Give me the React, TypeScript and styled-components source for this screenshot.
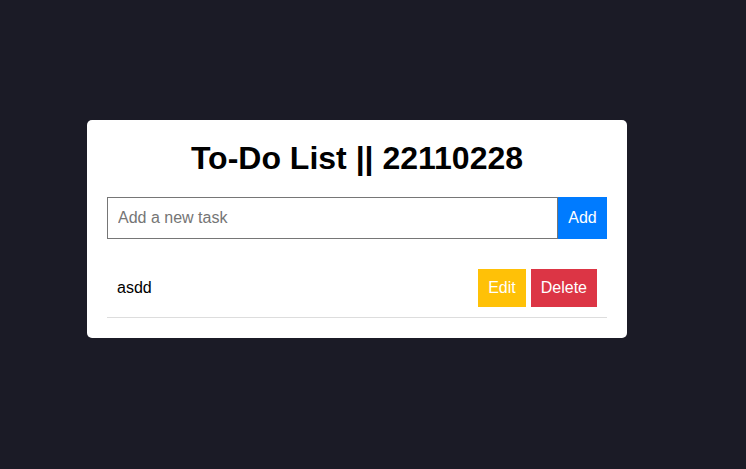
import React, { useState } from "react";
import styled, { createGlobalStyle } from "styled-components";

const GlobalStyle = createGlobalStyle`
  html, body {
    margin: 0;
    padding: 0;
    background: #1b1b26;
    font-family: "Liberation Sans", Arial, sans-serif;
  }
  * { box-sizing: border-box; }
`;

const Page = styled.div`
  min-height: 469px;
  padding: 120px 0 0 87px;
`;

const Card = styled.div`
  width: 540px;
  background: #ffffff;
  border-radius: 5px;
  padding: 20px;
`;

const Title = styled.h1`
  margin: 0 0 20px;
  font-size: 32px;
  font-weight: bold;
  color: #000;
  text-align: center;
  line-height: 37px;
`;

const InputRow = styled.div`
  display: flex;
`;

const TaskInput = styled.input`
  flex: 1;
  height: 42px;
  padding: 0 10px;
  font-size: 16px;
  font-family: "Liberation Sans", Arial, sans-serif;
  border: 1px solid #767676;
  border-radius: 0;
  outline: none;
  color: #000;
  &::placeholder { color: #757575; }
`;

const Button = styled.button<{ $bg: string }>`
  background: ${(p) => p.$bg};
  color: #fff;
  border: none;
  border-radius: 0;
  font-size: 16px;
  font-family: "Liberation Sans", Arial, sans-serif;
  padding: 10px;
  line-height: 18px;
  cursor: pointer;
`;

const AddButton = styled(Button)`
  height: 42px;
  width: 49px;
`;

const List = styled.ul`
  list-style: none;
  margin: 20px 0 0;
  padding: 0;
`;

const Item = styled.li`
  display: flex;
  align-items: center;
  padding: 10px;
  border-bottom: 1px solid #dddddd;
  font-size: 16px;
  color: #000;
`;

const ItemText = styled.span`
  flex: 1;
`;

const Actions = styled.div`
  display: flex;
  gap: 5px;
`;

export default function App() {
  const [tasks] = useState<string[]>(["asdd"]);
  const [value, setValue] = useState("");
  return (
    <>
      <GlobalStyle />
      <Page>
        <Card>
          <Title>To-Do List || 22110228</Title>
          <InputRow>
            <TaskInput
              placeholder="Add a new task"
              value={value}
              onChange={(e) => setValue(e.target.value)}
            />
            <AddButton $bg="#007bff">Add</AddButton>
          </InputRow>
          <List>
            {tasks.map((t, i) => (
              <Item key={i}>
                <ItemText>{t}</ItemText>
                <Actions>
                  <Button $bg="#ffc107">Edit</Button>
                  <Button $bg="#dc3545">Delete</Button>
                </Actions>
              </Item>
            ))}
          </List>
        </Card>
      </Page>
    </>
  );
}
